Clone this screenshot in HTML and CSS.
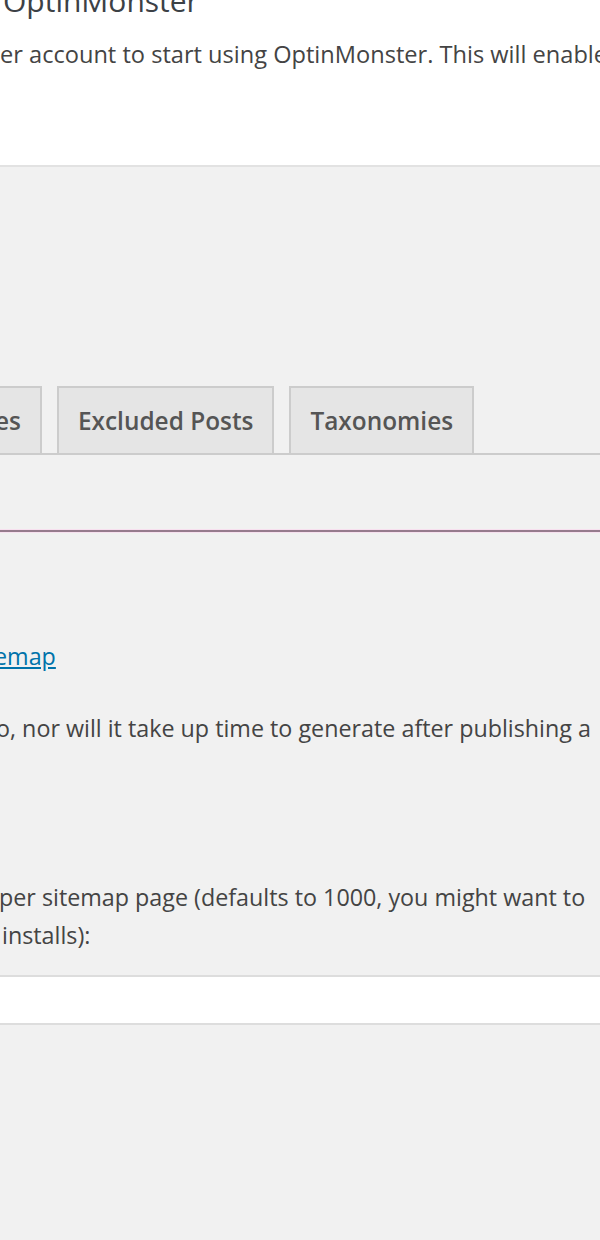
FILE: index.html
```html
<!DOCTYPE html>
<html lang="en">
<head>
    <meta charset="UTF-8">
    <meta name="viewport" content="width=device-width, initial-scale=1.0">
    <title>XML Sitemaps</title>
    <link rel="stylesheet" href="styles.css">
</head>
<body>
    <div class="notice">
        <h2 class="notice-title">OptinMonster</h2>
        <p class="notice-text">er account to start using OptinMonster. This will enable</p>
    </div>

    <div class="wrap">
        <div class="nav-tabs">
            <a class="nav-tab nav-tab-cut">es</a>
            <a class="nav-tab">Excluded Posts</a>
            <a class="nav-tab">Taxonomies</a>
        </div>

        <div class="divider"></div>

        <p class="link-row"><a href="#">emap</a></p>
        <p class="desc desc-cut">o, nor will it take up time to generate after publishing a</p>
        <p class="desc desc-limit">per sitemap page (defaults to 1000, you might want to<br><span class="indent">installs):</span></p>

        <input type="text" class="field">
    </div>
</body>
</html>
```

FILE: styles.css
```css
body {
    margin: 0;
    background-color: #f1f1f1;
    font-family: "Open Sans", "Noto Sans", sans-serif;
    color: #444;
    overflow: hidden;
}
.notice {
    display: flow-root;
    height: 165px;
    background: white;
    border-bottom: 2px solid #e2e2e2;
}
.notice-title {
    margin: -19px 0 0;
    padding-left: 3px;
    font-size: 30px;
    font-weight: 400;
    line-height: 40px;
    color: #3c4146;
    white-space: nowrap;
}
.notice-text {
    margin: 16px 0 0;
    font-size: 23.6px;
    line-height: 34px;
    white-space: nowrap;
}
.wrap {
    padding-top: 219px;
}
.nav-tabs {
    display: flex;
    gap: 15px;
    border-bottom: 2px solid #ccc;
}
.nav-tab {
    display: flex;
    align-items: center;
    height: 65px;
    padding: 0 19px;
    background: #e5e5e5;
    border: 2px solid #ccc;
    border-bottom: none;
    font-size: 24.4px;
    font-weight: 600;
    color: #555;
    white-space: nowrap;
}
.nav-tab-cut {
    margin-left: -5px;
    padding-left: 0;
    border-left: none;
}
.divider {
    margin-top: 75px;
    height: 2px;
    background: #967b8d;
    box-shadow: 0 1px 0 #f7e0ef, 0 -1px 0 #f7e0ef;
}
.link-row, .desc {
    font-size: 23.3px;
    line-height: 38px;
    white-space: nowrap;
}
.link-row {
    margin: 105px 0 0 -6px;
}
.link-row a {
    color: #0073aa;
}
.desc {
    margin: 34px 0 0;
}
.desc-cut {
    margin-left: -4px;
}
.desc-limit {
    margin-top: 131px;
    margin-left: -1px;
}
.indent {
    padding-left: 3px;
}
.field {
    display: block;
    width: 100%;
    height: 50px;
    margin-top: 21px;
    box-sizing: border-box;
    background: white;
    border: 2px solid #ddd;
    border-left: none;
    border-right: none;
}
```
